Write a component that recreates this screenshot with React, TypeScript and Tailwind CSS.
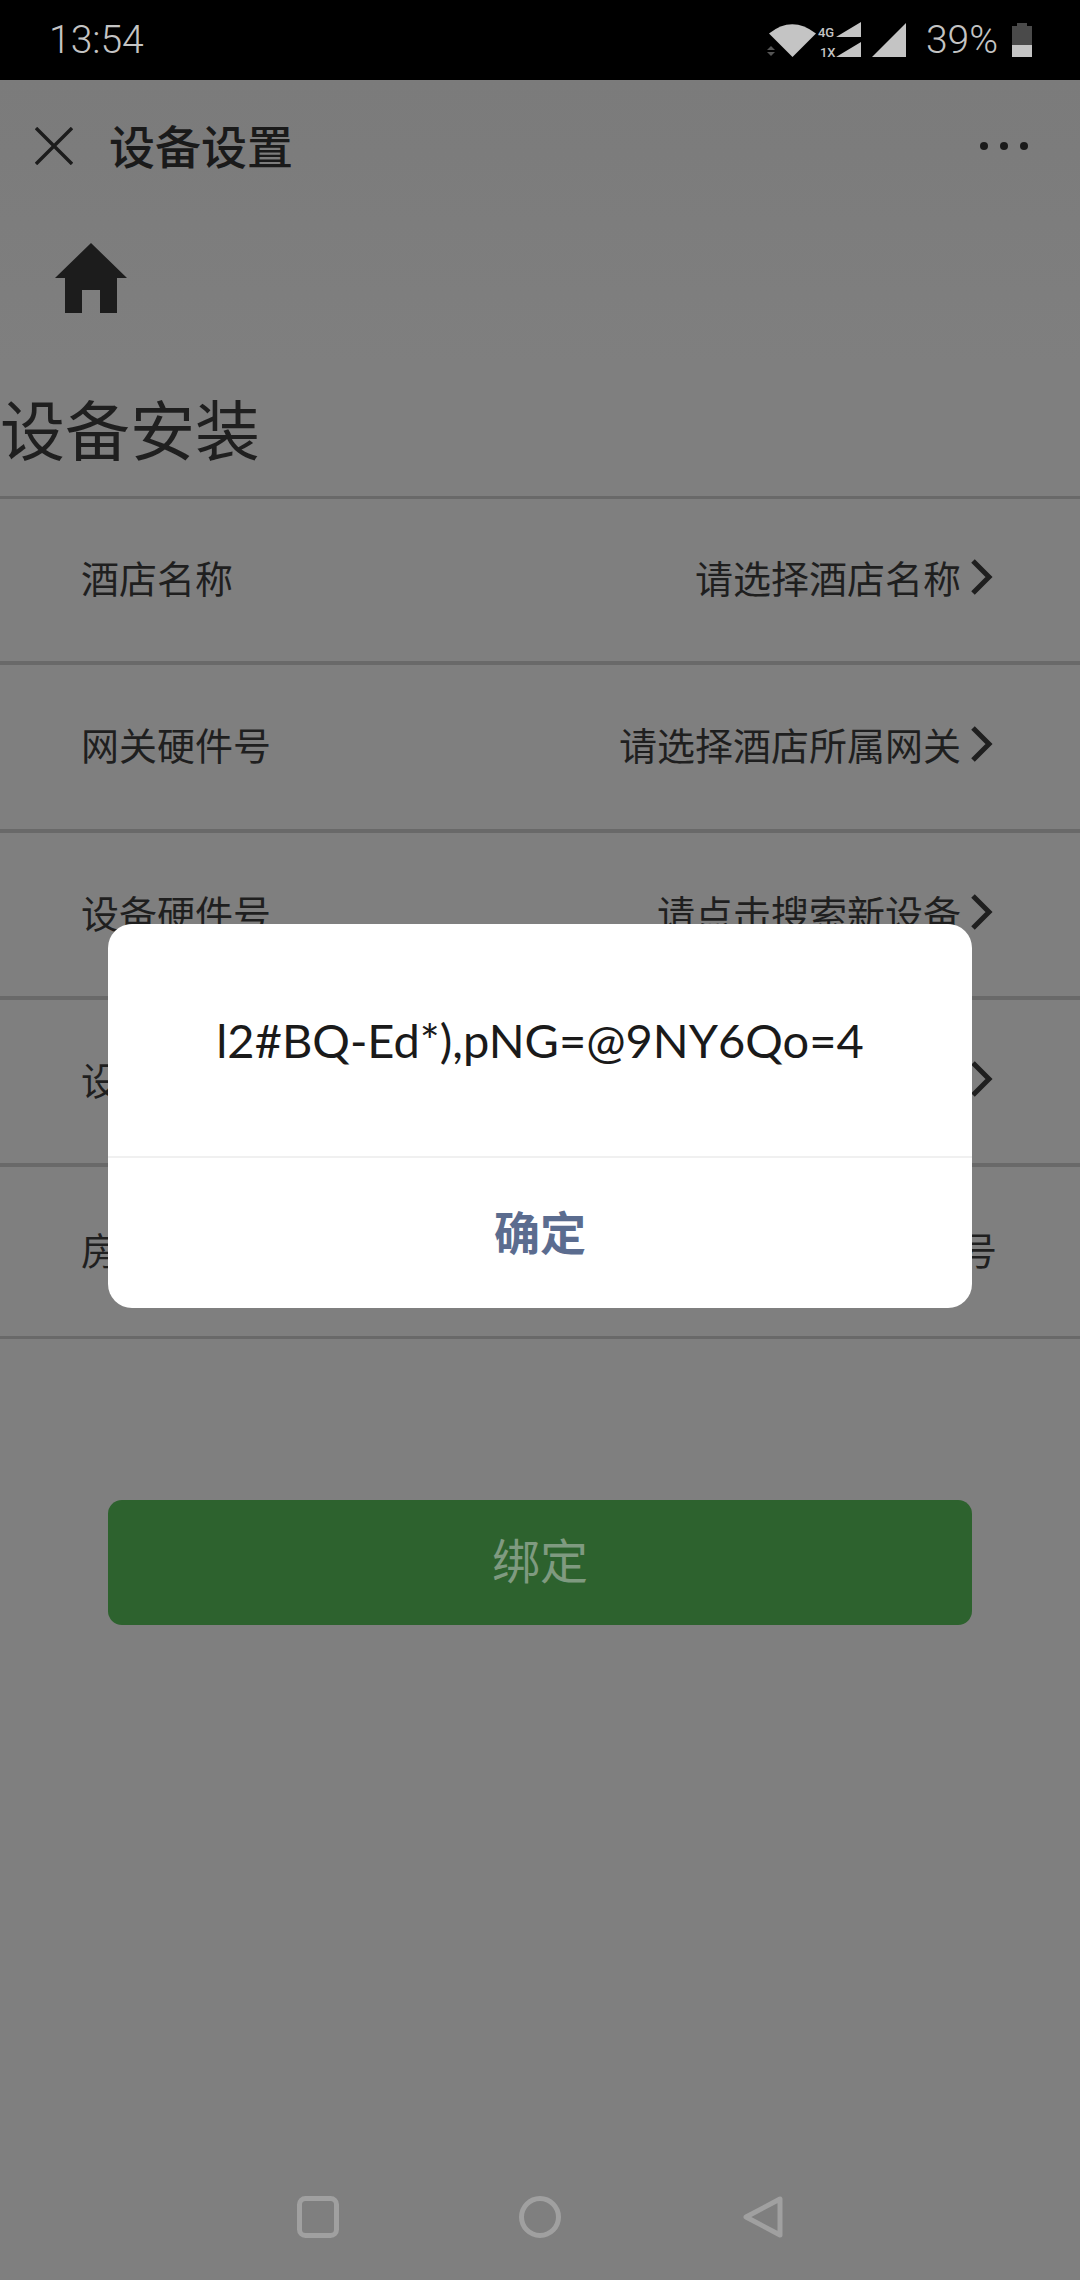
const CJK = "font-['Noto_Sans_CJK_SC','Noto_Sans',sans-serif]";

const rows = [
  { label: "酒店名称", hint: "请选择酒店名称", arrow: true, h: "h-[166px] border-b-4" },
  { label: "网关硬件号", hint: "请选择酒店所属网关", arrow: true, h: "h-[168px] border-b-4" },
  { label: "设备硬件号", hint: "请点击搜索新设备", arrow: true, h: "h-[167px] border-b-4" },
  { label: "设备名称", hint: "", arrow: true, h: "h-[167px] border-b-4" },
  { label: "房间号", hint: "请输入房间号", arrow: false, h: "h-[172px] border-b-[3px]" },
];

function StatusBar() {
  return (
    <div className="h-[80px] bg-black flex items-center justify-between pl-[49px] pr-[48px] text-[#c4c4c4]">
      <span className="font-['Roboto',sans-serif] font-light text-[39px] leading-none">13:54</span>
      <div className="flex items-center">
        <svg width="50" height="38" viewBox="0 0 50 38" className="mr-[1px]">
          <path d="M2 12.5 Q 25 -6 49 12.5 L 25.5 36 Z" fill="#c4c4c4" />
          <path d="M0 29 L4 25 L8 29 Z M0 31 L8 31 L4 35 Z" fill="#555" />
        </svg>
        <div className="w-[43px] h-[38px] relative text-[13px] leading-none font-['Roboto',sans-serif] font-medium">
          <span className="absolute left-0 top-[5px]">4G</span>
          <span className="absolute left-[2px] top-[25px]">1X</span>
          <svg width="43" height="38" viewBox="0 0 43 38" className="absolute inset-0">
            <path d="M18 16 L43 1 V16 Z M18 36 L43 21 V36 Z" fill="#c4c4c4" />
          </svg>
        </div>
        <svg width="34" height="38" viewBox="0 0 34 38" className="ml-[11px]">
          <path d="M0 36 L34 2 V36 Z" fill="#c4c4c4" />
        </svg>
        <span className="ml-[20px] font-['Roboto',sans-serif] font-light text-[39px] leading-none">39%</span>
        <svg width="20" height="36" viewBox="0 0 20 36" className="ml-[14px]">
          <path d="M5 1 H15 V4 H20 V23 H0 V4 H5 Z" fill="#4a4a4a" />
          <path d="M0 23 H20 V35 H0 Z" fill="#c4c4c4" />
        </svg>
      </div>
    </div>
  );
}

function NavBar() {
  return (
    <div className="h-[131px] flex items-center justify-between pl-[35px] pr-[52px]">
      <div className="flex items-center">
        <svg width="38" height="38" viewBox="0 0 38 38" stroke="#1c1c1c" strokeWidth="3.4">
          <path d="M1 1 L37 37 M37 1 L1 37" />
        </svg>
        <span className={`${CJK} ml-[36px] pb-[3px] text-[46px] leading-none font-medium text-[#1a1a1a]`}>设备设置</span>
      </div>
      <div className="flex gap-[12px]">
        <span className="w-[8px] h-[8px] rounded-full bg-[#1a1a1a]" />
        <span className="w-[8px] h-[8px] rounded-full bg-[#1a1a1a]" />
        <span className="w-[8px] h-[8px] rounded-full bg-[#1a1a1a]" />
      </div>
    </div>
  );
}

function HomeIcon() {
  return (
    <svg width="72" height="70" viewBox="0 0 72 70" className="ml-[55px] mt-[32px]">
      <path d="M36 0 L72 35 H62 V70 H45 V47 H27 V70 H10 V35 H0 Z" fill="#1c1c1c" />
    </svg>
  );
}

function Row({ label, hint, arrow, h }: (typeof rows)[number]) {
  return (
    <div
      className={`${h} border-[#696969] flex items-center justify-between pl-[81px] ${arrow ? "pr-[87px]" : "pr-[83px]"} pb-[6px] ${CJK} text-[38px] text-[#1f1f1f]`}
    >
      <span className="leading-none">{label}</span>
      <div className="flex items-center">
        <span className="leading-none">{hint}</span>
        {arrow ? (
          <svg width="22" height="36" viewBox="0 0 22 36" fill="none" stroke="#1f1f1f" strokeWidth="5" className="ml-[10px]">
            <path d="M2 2 L18 18 L2 34" />
          </svg>
        ) : null}
      </div>
    </div>
  );
}

function Dialog() {
  return (
    <div className="absolute left-[108px] top-[924px] w-[864px] h-[384px] bg-white rounded-[24px] flex flex-col">
      <div className="h-[234px] flex items-center justify-center border-b-2 border-[#f0f0f0] font-['Lato',sans-serif] text-[47px] text-[#1a1a1a]">
        l2#BQ-Ed*),pNG=@9NY6Qo=4
      </div>
      <div className={`flex-1 flex items-center justify-center pb-[5px] ${CJK} text-[46px] font-bold text-[#5b6c8f]`}>确定</div>
    </div>
  );
}

function NavKeys() {
  return (
    <div className="absolute left-0 right-0 top-[2196px] flex justify-center gap-[180px]">
      <svg width="42" height="42" viewBox="0 0 42 42" fill="none" stroke="#a0a0a0" strokeWidth="5">
        <rect x="2.5" y="2.5" width="37" height="37" rx="6" />
      </svg>
      <svg width="42" height="42" viewBox="0 0 42 42" fill="none" stroke="#a0a0a0" strokeWidth="5">
        <circle cx="21" cy="21" r="18.5" />
      </svg>
      <svg width="42" height="42" viewBox="0 0 42 42" fill="none" stroke="#a0a0a0" strokeWidth="5" strokeLinejoin="round">
        <path d="M5 21 L39 3 V39 Z" />
      </svg>
    </div>
  );
}

export default function App() {
  return (
    <div className="relative w-[1080px] h-[2280px] overflow-hidden bg-[#7f7f7f]">
      <StatusBar />
      <div className="h-[283px] bg-linear-to-b from-[#7b7b7b] to-[#7f7f7f]">
        <NavBar />
        <HomeIcon />
      </div>
      <div className={`${CJK} h-[136px] flex items-center pb-[4px] text-[65px] leading-none text-[#1f1f1f] border-b-[3px] border-[#696969]`}>
        设备安装
      </div>
      {rows.map((r) => (
        <Row key={r.label} {...r} />
      ))}
      <div className="mt-[161px] mx-[108px] h-[125px] pb-[2px] rounded-[14px] bg-[#2d622e] flex items-center justify-center">
        <span className={`${CJK} text-[48px] leading-none pb-[7px] text-[#7f9a80]`}>绑定</span>
      </div>
      <Dialog />
      <NavKeys />
    </div>
  );
}
